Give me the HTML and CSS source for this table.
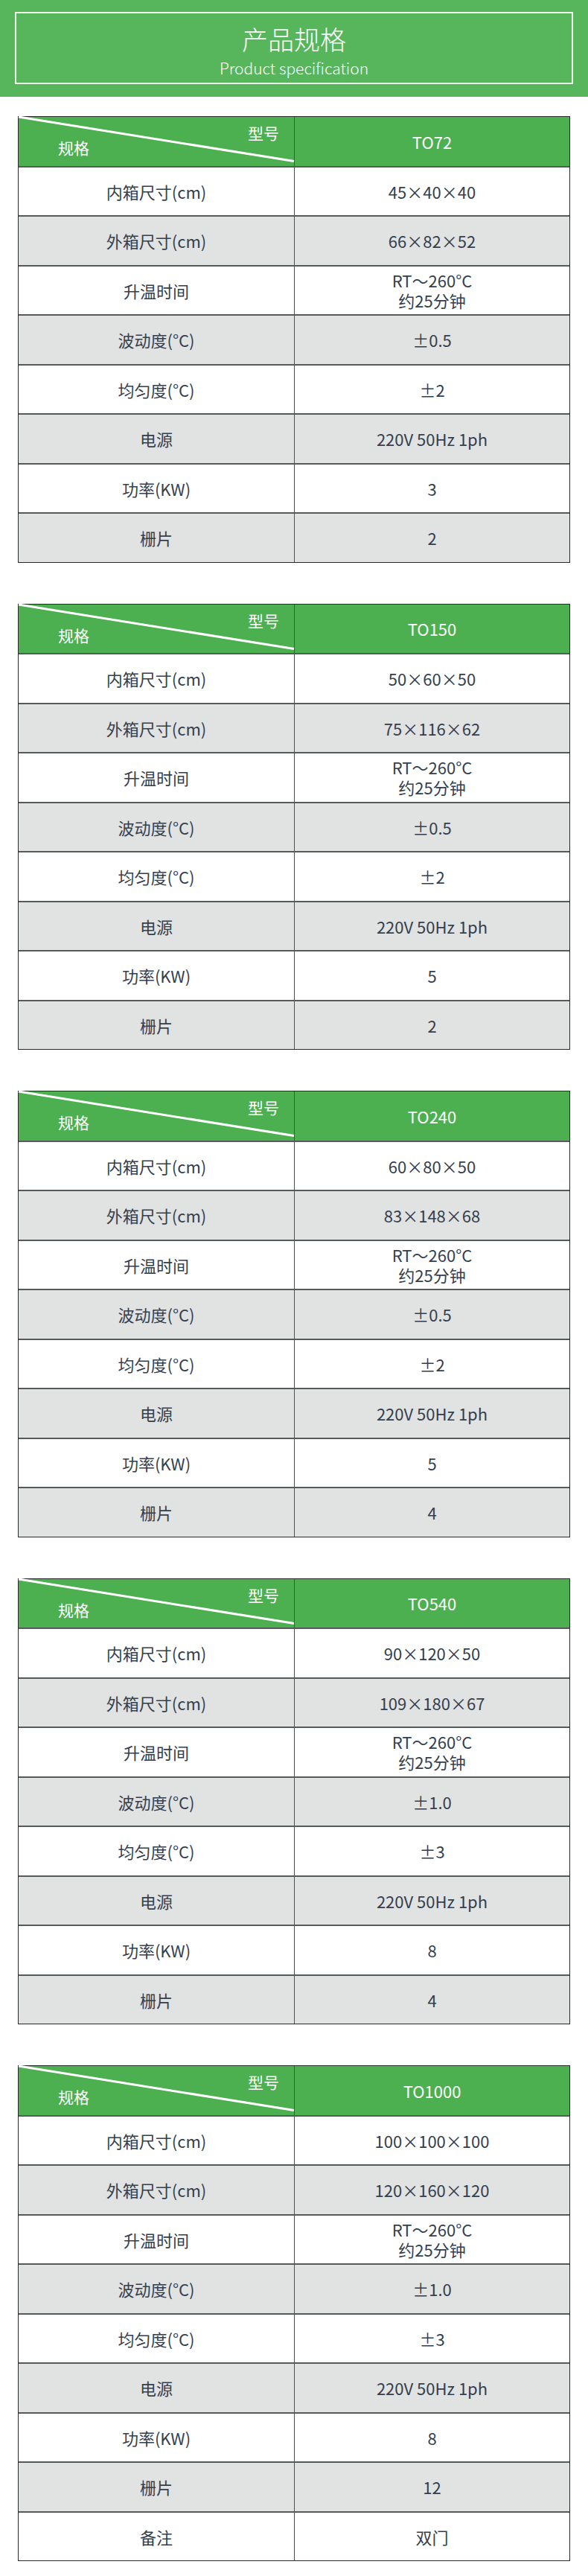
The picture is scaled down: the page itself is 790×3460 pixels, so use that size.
FILE: index.html
```html
<!DOCTYPE html>
<html lang="zh-CN">
<head>
<meta charset="utf-8">
<title>产品规格</title>
<link rel="stylesheet" href="styles.css">
</head>
<body>
<header class="band">
  <div class="band-frame">
    <h1 class="band-title">产品规格</h1>
    <p class="band-sub">Product specification</p>
  </div>
</header>

<main class="tables">
  <section class="spec">
    <div class="row head">
      <div class="cell diag">
        <svg class="diag-line" viewBox="0 0 100 100" preserveAspectRatio="none"><line x1="0" y1="0" x2="100" y2="91" vector-effect="non-scaling-stroke"/></svg>
        <span class="diag-top">型号</span>
        <span class="diag-bottom">规格</span>
      </div>
      <div class="cell">TO72</div>
    </div>
    <div class="row"><div class="cell">内箱尺寸(cm)</div><div class="cell">45×40×40</div></div>
    <div class="row alt"><div class="cell">外箱尺寸(cm)</div><div class="cell">66×82×52</div></div>
    <div class="row"><div class="cell">升温时间</div><div class="cell two">RT～260°C<br>约25分钟</div></div>
    <div class="row alt"><div class="cell">波动度(°C)</div><div class="cell">±0.5</div></div>
    <div class="row"><div class="cell">均匀度(°C)</div><div class="cell">±2</div></div>
    <div class="row alt"><div class="cell">电源</div><div class="cell">220V 50Hz 1ph</div></div>
    <div class="row"><div class="cell">功率(KW)</div><div class="cell">3</div></div>
    <div class="row alt"><div class="cell">栅片</div><div class="cell">2</div></div>
  </section>

  <section class="spec">
    <div class="row head">
      <div class="cell diag">
        <svg class="diag-line" viewBox="0 0 100 100" preserveAspectRatio="none"><line x1="0" y1="0" x2="100" y2="91" vector-effect="non-scaling-stroke"/></svg>
        <span class="diag-top">型号</span>
        <span class="diag-bottom">规格</span>
      </div>
      <div class="cell">TO150</div>
    </div>
    <div class="row"><div class="cell">内箱尺寸(cm)</div><div class="cell">50×60×50</div></div>
    <div class="row alt"><div class="cell">外箱尺寸(cm)</div><div class="cell">75×116×62</div></div>
    <div class="row"><div class="cell">升温时间</div><div class="cell two">RT～260°C<br>约25分钟</div></div>
    <div class="row alt"><div class="cell">波动度(°C)</div><div class="cell">±0.5</div></div>
    <div class="row"><div class="cell">均匀度(°C)</div><div class="cell">±2</div></div>
    <div class="row alt"><div class="cell">电源</div><div class="cell">220V 50Hz 1ph</div></div>
    <div class="row"><div class="cell">功率(KW)</div><div class="cell">5</div></div>
    <div class="row alt"><div class="cell">栅片</div><div class="cell">2</div></div>
  </section>

  <section class="spec">
    <div class="row head">
      <div class="cell diag">
        <svg class="diag-line" viewBox="0 0 100 100" preserveAspectRatio="none"><line x1="0" y1="0" x2="100" y2="91" vector-effect="non-scaling-stroke"/></svg>
        <span class="diag-top">型号</span>
        <span class="diag-bottom">规格</span>
      </div>
      <div class="cell">TO240</div>
    </div>
    <div class="row"><div class="cell">内箱尺寸(cm)</div><div class="cell">60×80×50</div></div>
    <div class="row alt"><div class="cell">外箱尺寸(cm)</div><div class="cell">83×148×68</div></div>
    <div class="row"><div class="cell">升温时间</div><div class="cell two">RT～260°C<br>约25分钟</div></div>
    <div class="row alt"><div class="cell">波动度(°C)</div><div class="cell">±0.5</div></div>
    <div class="row"><div class="cell">均匀度(°C)</div><div class="cell">±2</div></div>
    <div class="row alt"><div class="cell">电源</div><div class="cell">220V 50Hz 1ph</div></div>
    <div class="row"><div class="cell">功率(KW)</div><div class="cell">5</div></div>
    <div class="row alt"><div class="cell">栅片</div><div class="cell">4</div></div>
  </section>

  <section class="spec">
    <div class="row head">
      <div class="cell diag">
        <svg class="diag-line" viewBox="0 0 100 100" preserveAspectRatio="none"><line x1="0" y1="0" x2="100" y2="91" vector-effect="non-scaling-stroke"/></svg>
        <span class="diag-top">型号</span>
        <span class="diag-bottom">规格</span>
      </div>
      <div class="cell">TO540</div>
    </div>
    <div class="row"><div class="cell">内箱尺寸(cm)</div><div class="cell">90×120×50</div></div>
    <div class="row alt"><div class="cell">外箱尺寸(cm)</div><div class="cell">109×180×67</div></div>
    <div class="row"><div class="cell">升温时间</div><div class="cell two">RT～260°C<br>约25分钟</div></div>
    <div class="row alt"><div class="cell">波动度(°C)</div><div class="cell">±1.0</div></div>
    <div class="row"><div class="cell">均匀度(°C)</div><div class="cell">±3</div></div>
    <div class="row alt"><div class="cell">电源</div><div class="cell">220V 50Hz 1ph</div></div>
    <div class="row"><div class="cell">功率(KW)</div><div class="cell">8</div></div>
    <div class="row alt"><div class="cell">栅片</div><div class="cell">4</div></div>
  </section>

  <section class="spec">
    <div class="row head">
      <div class="cell diag">
        <svg class="diag-line" viewBox="0 0 100 100" preserveAspectRatio="none"><line x1="0" y1="0" x2="100" y2="91" vector-effect="non-scaling-stroke"/></svg>
        <span class="diag-top">型号</span>
        <span class="diag-bottom">规格</span>
      </div>
      <div class="cell">TO1000</div>
    </div>
    <div class="row"><div class="cell">内箱尺寸(cm)</div><div class="cell">100×100×100</div></div>
    <div class="row alt"><div class="cell">外箱尺寸(cm)</div><div class="cell">120×160×120</div></div>
    <div class="row"><div class="cell">升温时间</div><div class="cell two">RT～260°C<br>约25分钟</div></div>
    <div class="row alt"><div class="cell">波动度(°C)</div><div class="cell">±1.0</div></div>
    <div class="row"><div class="cell">均匀度(°C)</div><div class="cell">±3</div></div>
    <div class="row alt"><div class="cell">电源</div><div class="cell">220V 50Hz 1ph</div></div>
    <div class="row"><div class="cell">功率(KW)</div><div class="cell">8</div></div>
    <div class="row alt"><div class="cell">栅片</div><div class="cell">12</div></div>
    <div class="row"><div class="cell">备注</div><div class="cell">双门</div></div>
  </section>
</main>
</body>
</html>
```

FILE: styles.css
```css
html, body {
  margin: 0;
  padding: 0;
  background: #ffffff;
}

body {
  width: 790px;
  font-family: "Noto Sans CJK SC", "Noto Sans", sans-serif;
  color: #34404e;
}

.band {
  height: 130px;
  background: #57b55c;
  padding: 16px 20px 17px;
  box-sizing: border-box;
}

.band-frame {
  height: 97px;
  border: 2px solid #eef7ea;
  box-sizing: border-box;
  display: flex;
  flex-direction: column;
  align-items: center;
  justify-content: flex-start;
  padding-top: 14px;
  color: #ffffff;
}

.band-title {
  margin: 0 0 5px;
  font-size: 35px;
  font-weight: 300;
  line-height: 40px;
}

.band-sub {
  margin: 0;
  font-size: 21px;
  font-weight: 300;
  line-height: 28px;
}

.tables {
  padding: 26px 24px 0;
  display: flex;
  flex-direction: column;
  gap: 55px;
}

.spec {
  border: 1px solid #2a2a2a;
}

.row {
  display: grid;
  grid-template-columns: 1fr 1fr;
  height: 66.5px;
  box-sizing: border-box;
  border-top: 2px solid #555a5c;
  background: #ffffff;
}

.row.head {
  border-top: 0;
  height: 65.5px;
  background: #4caf50;
  color: #ffffff;
}

.row.alt {
  background: #e1e2e2;
}

.cell {
  display: flex;
  align-items: center;
  justify-content: center;
  text-align: center;
  font-size: 22px;
  line-height: 26px;
}

.cell + .cell {
  border-left: 1.5px solid #4a4f52;
}

.cell.two {
  line-height: 27px;
}

.head .cell {
  font-size: 22px;
}

.cell.diag {
  position: relative;
  display: flex;
  flex-direction: column;
  align-items: stretch;
  justify-content: flex-start;
  font-size: 21px;
  line-height: 24px;
}

.diag-line {
  position: absolute;
  left: 0;
  top: 0;
  width: 100%;
  height: 100%;
  overflow: visible;
}

.diag-line line {
  stroke: #ffffff;
  stroke-width: 3;
}

.diag-top {
  align-self: flex-end;
  margin-top: 9px;
  margin-right: 20px;
}

.diag-bottom {
  align-self: flex-start;
  margin-top: -4px;
  margin-left: 53px;
}
```
